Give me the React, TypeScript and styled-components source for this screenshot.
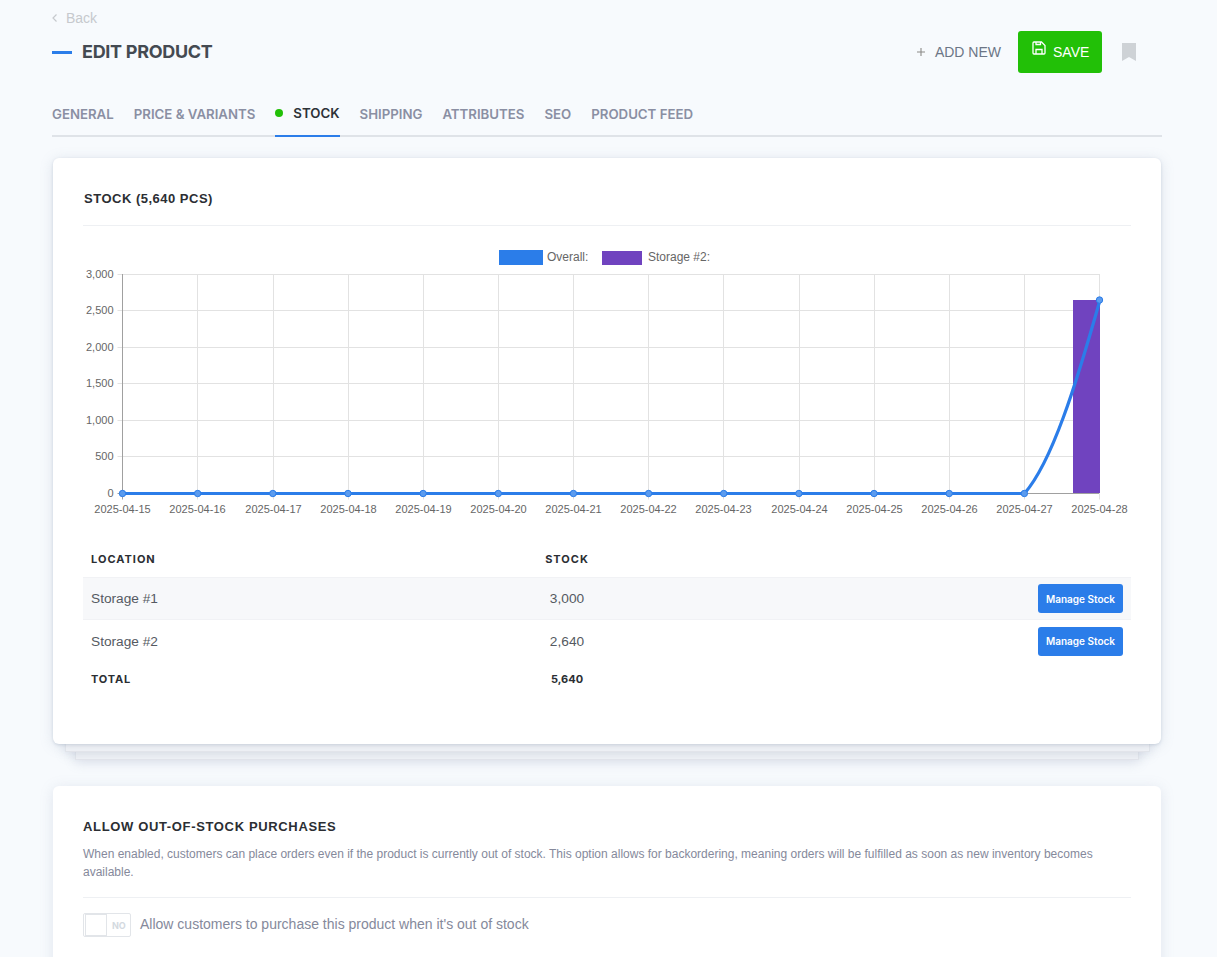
import React, { FC } from 'react';
import styled, { createGlobalStyle } from 'styled-components';

const GlobalStyle = createGlobalStyle`
  html, body {
    margin: 0;
    height: 957px;
    overflow: hidden;
    background: #f7fafd;
    font-family: "Liberation Sans", Arial, sans-serif;
  }
  * { box-sizing: border-box; }
`;

const Page = styled.div`
  padding: 9px 55px 0 52px;
`;

const BackLink = styled.a`
  display: flex;
  align-items: center;
  gap: 9px;
  height: 18px;
  font-size: 14px;
  color: #c6c9cd;
`;

const Header = styled.div`
  display: flex;
  align-items: center;
  justify-content: space-between;
  height: 52px;
  margin-top: -1px;
  padding-right: 26px;
`;

const Title = styled.h1`
  display: flex;
  align-items: center;
  gap: 10px;
  margin: 0;
  padding-bottom: 2px;
  font: 700 18px Inter, sans-serif;
  letter-spacing: -0.3px;
  color: #444a52;
  &::before {
    content: '';
    width: 20px;
    height: 3px;
    margin-top: 2px;
    background: #2b7de9;
  }
`;

const Actions = styled.div`
  display: flex;
  align-items: center;
`;

const AddNew = styled.a`
  display: flex;
  align-items: center;
  gap: 9px;
  margin-right: 17px;
  font-size: 14px;
  color: #6c7686;
`;

const SaveButton = styled.button`
  display: flex;
  align-items: center;
  gap: 7px;
  width: 84px;
  height: 42px;
  padding: 0 0 0 14px;
  border: 0;
  border-radius: 3px;
  background: #22c007;
  color: #fff;
  font: 14px "Liberation Sans", sans-serif;
  svg { margin-top: -9px; }
`;

const Bookmark = styled.svg`
  margin-left: 20px;
`;

const Tabs = styled.nav`
  display: flex;
  gap: 20px;
  height: 44px;
  margin-top: 15px;
  border-bottom: 2px solid #dfe3e8;
`;

const Tab = styled.a<{ $active?: boolean }>`
  display: flex;
  align-items: center;
  gap: 10px;
  height: 44px;
  padding-bottom: 2px;
  font: 600 13.24px Inter, sans-serif;
  color: ${p => (p.$active ? '#2d3238' : '#8a8fa3')};
  ${p => p.$active && 'border-bottom: 2px solid #2b7de9;'}
`;

const Dot = styled.span`
  width: 8px;
  height: 8px;
  border-radius: 50%;
  background: #22c007;
`;

const Card = styled.section`
  margin: 0 1px;
  border-radius: 6px;
  background: #fff;
  box-shadow: 0 2px 14px rgba(120, 135, 165, 0.18);
`;

const StackedCard = styled(Card)`
  position: relative;
  height: 586px;
  margin-top: 21px;
  padding: 33px 30px 0;
  box-shadow: 0 1px 3px rgba(120, 135, 165, 0.25), 0 2px 14px rgba(120, 135, 165, 0.2);
  &::before,
  &::after {
    content: '';
    position: absolute;
    z-index: -1;
    height: 20px;
    background: #f4f6f9;
    border: 1px solid #e6e9ee;
    box-shadow: 0 3px 12px rgba(120, 135, 165, 0.2);
  }
  &::before { left: 12px; right: 11px; bottom: -8px; }
  &::after { left: 22px; right: 22px; bottom: -16px; z-index: -2; }
`;

const Layers = styled.div`
  position: relative;
  z-index: 0;
`;

const CardTitle = styled.h2`
  margin: 0;
  padding-bottom: 19px;
  padding-left: 1px;
  border-bottom: 1px solid #eef0f3;
  font: 700 13px/15px "Liberation Sans", sans-serif;
  letter-spacing: 0.5px;
  color: #2b2e33;
`;

const Chart = styled.svg`
  display: block;
  margin-top: 14px;
  text {
    font-family: "Liberation Sans", sans-serif;
    font-size: 11px;
    fill: #666;
  }
  text.legend { font-size: 12px; }
`;

const StockRow = styled.div<{ $shaded?: boolean }>`
  display: grid;
  grid-template-columns: 426px 100px 1fr;
  align-items: center;
  height: ${p => (p.$shaded ? '43px' : '42px')};
  padding-left: 8px;
  padding-right: 8px;
  font-size: 13.7px;
  color: #555a62;
  ${p => p.$shaded && 'background: #f7f8fa; border-top: 1px solid #f1f2f5; border-bottom: 1px solid #f1f2f5;'}
`;

const HeadRow = styled(StockRow)`
  height: 37px;
  margin-top: 15px;
  font: 700 11px Inter, sans-serif;
  letter-spacing: 1px;
  color: #2b2e33;
`;

const TotalRow = styled(StockRow)`
  height: 34px;
  font: 700 11px Inter, sans-serif;
  letter-spacing: 0.8px;
  color: #2b2e33;
`;

const Center = styled.div`
  text-align: center;
`;

const TotalValue = styled(Center)`
  letter-spacing: 0;
`;

const ManageButton = styled.button`
  justify-self: end;
  width: 85px;
  height: 29px;
  padding: 0;
  border: 0;
  border-radius: 3px;
  background: #2b7de9;
  color: #fff;
  font: 600 10px Inter, sans-serif;
`;

const OptionCard = styled(Card)`
  margin-top: 42px;
  padding: 33px 30px 0;
  height: 300px;
`;

const OptionTitle = styled.h2`
  margin: 0 0 11px;
  font: 700 13px/15px "Liberation Sans", sans-serif;
  letter-spacing: 0.65px;
  color: #2b2e33;
`;

const Description = styled.p`
  margin: 0;
  padding-bottom: 16px;
  border-bottom: 1px solid #eef0f3;
  font-size: 12px;
  line-height: 18px;
  color: #85899b;
`;

const ToggleRow = styled.label`
  display: flex;
  align-items: center;
  gap: 9px;
  margin-top: 13px;
  font-size: 14px;
  color: #85899b;
`;

const Toggle = styled.span`
  display: flex;
  align-items: center;
  width: 48px;
  height: 24px;
  margin-top: 2px;
  padding: 1px;
  border: 1px solid #e2e5e9;
  border-radius: 2px;
  &::before {
    content: '';
    width: 20px;
    height: 20px;
    border: 1px solid #e2e5e9;
  }
  &::after {
    content: 'NO';
    margin-left: 5px;
    font: 700 9px Inter, sans-serif;
    color: #d3d9e0;
  }
`;

const TABS = ['GENERAL', 'PRICE & VARIANTS', 'STOCK', 'SHIPPING', 'ATTRIBUTES', 'SEO', 'PRODUCT FEED'];
const DATES = Array.from({ length: 14 }, (_, i) => `2025-04-${15 + i}`);
const LEFT = 122.5;
const RIGHT = 1099.5;
const TOP = 274;
const BOTTOM = 493.5;
const STEP_X = (RIGHT - LEFT) / 13;
const STEP_Y = (BOTTOM - TOP) / 6;
const Y_LABELS = ['3,000', '2,500', '2,000', '1,500', '1,000', '500', '0'];

const StockChart: FC = () => (
  <Chart width={1048} height={285} viewBox="83 240 1048 285">
    <rect x={499} y={250} width={44} height={15} fill="#2b7de9" />
    <text className="legend" x={547} y={261}>Overall:</text>
    <rect x={602} y={251} width={40} height={14} fill="#7043bf" />
    <text className="legend" x={648} y={261}>Storage #2:</text>

    {Y_LABELS.map((label, i) => {
      const y = Math.floor(TOP + i * STEP_Y) + 0.5;
      return (
        <g key={label}>
          <line x1={LEFT - 5} x2={RIGHT} y1={y} y2={y} stroke={i === 6 ? '#a0a0a0' : '#e2e2e2'} />
          <text x={LEFT - 9} y={y + 3.5} textAnchor="end">{label}</text>
        </g>
      );
    })}
    {DATES.map((date, i) => {
      const x = Math.round(LEFT + i * STEP_X - 0.3) + 0.5;
      return (
        <g key={date}>
          <line x1={x} x2={x} y1={TOP} y2={BOTTOM + 6} stroke={i === 0 ? '#a0a0a0' : '#e2e2e2'} />
          <text x={x} y={513} textAnchor="middle">{date}</text>
        </g>
      );
    })}

    <rect x={1073} y={300} width={27} height={193} fill="#7043bf" />
    <path
      d={`M${LEFT} 493.5 H1024.5 C1052 462 1076 385 1100 300`}
      fill="none"
      stroke="#2b7de9"
      strokeWidth={3.2}
    />
    {DATES.map((date, i) => (
      <circle
        key={date}
        cx={LEFT + i * STEP_X}
        cy={i === 13 ? 300 : 493.5}
        r={3.2}
        fill="#5b9bee"
        stroke="#2b7de9"
      />
    ))}
  </Chart>
);

const App: FC = () => {
  return (
    <Page>
      <GlobalStyle />
      <BackLink>
        <svg width="5" height="8" viewBox="0 0 5 8" fill="none" stroke="#c6c9cd" strokeWidth="1.2">
          <path d="M4.5 .5 1 4l3.5 3.5" />
        </svg>
        Back
      </BackLink>

      <Header>
        <Title>EDIT PRODUCT</Title>
        <Actions>
          <AddNew>
            <svg width="10" height="10" viewBox="0 0 10 10" stroke="#8c8a88" strokeWidth="1.1">
              <path d="M5 1v8M1 5h8" />
            </svg>
            ADD NEW
          </AddNew>
          <SaveButton>
            <svg width="14" height="14" viewBox="0 0 14 14" fill="none" stroke="#fff" strokeWidth="1.3">
              <path d="M1 2a1 1 0 0 1 1-1h7.5L13 4.5V12a1 1 0 0 1-1 1H2a1 1 0 0 1-1-1z" />
              <path d="M4 13V8.5h6V13M4 1v2.5h4.5V1" />
            </svg>
            SAVE
          </SaveButton>
          <Bookmark width="14" height="18" viewBox="0 0 14 18">
            <path d="M0 0h14v18l-7-4-7 4z" fill="#ced2d6" />
          </Bookmark>
        </Actions>
      </Header>

      <Tabs>
        {TABS.map(tab => (
          <Tab key={tab} $active={tab === 'STOCK'}>
            {tab === 'STOCK' && <Dot />}
            {tab}
          </Tab>
        ))}
      </Tabs>

      <Layers>
        <StackedCard>
          <CardTitle>STOCK (5,640 PCS)</CardTitle>
          <StockChart />
          <HeadRow>
            <div>LOCATION</div>
            <Center>STOCK</Center>
          </HeadRow>
          <StockRow $shaded>
            <div>Storage #1</div>
            <Center>3,000</Center>
            <ManageButton>Manage Stock</ManageButton>
          </StockRow>
          <StockRow>
            <div>Storage #2</div>
            <Center>2,640</Center>
            <ManageButton>Manage Stock</ManageButton>
          </StockRow>
          <TotalRow>
            <div>TOTAL</div>
            <TotalValue>5,640</TotalValue>
          </TotalRow>
        </StackedCard>
      </Layers>

      <OptionCard>
        <OptionTitle>ALLOW OUT-OF-STOCK PURCHASES</OptionTitle>
        <Description>
          When enabled, customers can place orders even if the product is currently out of stock. This option allows for
          backordering, meaning orders will be fulfilled as soon as new inventory becomes available.
        </Description>
        <ToggleRow>
          <Toggle />
          Allow customers to purchase this product when it's out of stock
        </ToggleRow>
      </OptionCard>
    </Page>
  );
};

export default App;
